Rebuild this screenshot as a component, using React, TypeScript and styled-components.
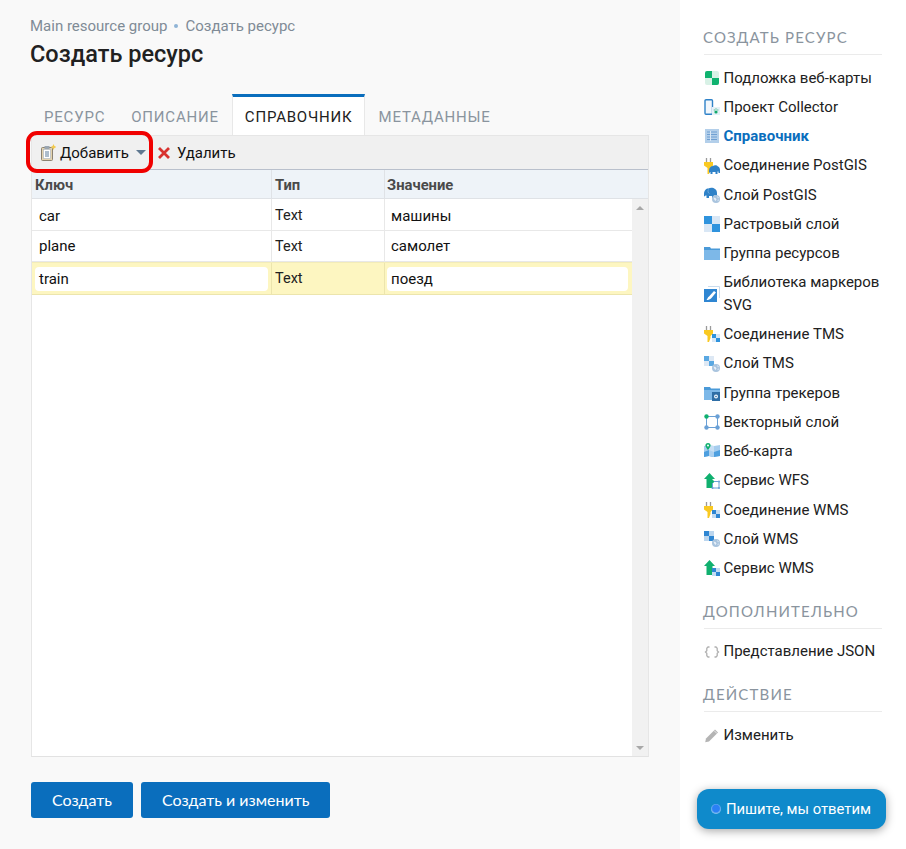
import React from 'react';
import styled, { createGlobalStyle } from 'styled-components';

const GlobalStyle = createGlobalStyle`
	html, body {
		margin: 0;
		padding: 0;
		background: #fff;
		font-family: Roboto, 'Liberation Sans', sans-serif;
		color: #212121;
	}
`;

const tabs = ['Ресурс', 'Описание', 'Справочник', 'Метаданные'];

const rows = [
	{ key: 'car', type: 'Text', value: 'машины' },
	{ key: 'plane', type: 'Text', value: 'самолет' },
	{ key: 'train', type: 'Text', value: 'поезд', selected: true },
];

const createItems = [
	{ icon: 'basemap', label: 'Подложка веб-карты' },
	{ icon: 'collector', label: 'Проект Collector' },
	{ icon: 'lookup', label: 'Справочник', active: true },
	{ icon: 'pgConn', label: 'Соединение PostGIS' },
	{ icon: 'pgLayer', label: 'Слой PostGIS' },
	{ icon: 'raster', label: 'Растровый слой' },
	{ icon: 'folder', label: 'Группа ресурсов' },
	{ icon: 'marker', label: 'Библиотека маркеров SVG' },
	{ icon: 'tmsConn', label: 'Соединение TMS' },
	{ icon: 'tmsLayer', label: 'Слой TMS' },
	{ icon: 'tracker', label: 'Группа трекеров' },
	{ icon: 'vector', label: 'Векторный слой' },
	{ icon: 'webmap', label: 'Веб-карта' },
	{ icon: 'wfs', label: 'Сервис WFS' },
	{ icon: 'wmsConn', label: 'Соединение WMS' },
	{ icon: 'wmsLayer', label: 'Слой WMS' },
	{ icon: 'wmsService', label: 'Сервис WMS' },
];

const Plug = () => (
	<g>
		<path d='M2.500 0v4M6.500 0v4' stroke='#9a9a9a' strokeWidth='1.300' />
		<path d='M0 4h9v3.500L6.500 10v2L5 16H3.500V10L0 7.500z' fill='#f9c922' />
	</g>
);

const Elephant = ({ x = 0, y = 0 }: { x?: number; y?: number }) => (
	<g transform={`translate(${x} ${y})`}>
		<path d='M0 5.500C0 2.500 2 1 4 1c1-1 4-1 5 .5 1.500.5 2 2 2 3.500v3H9.500V6.500h-1V9H6.500V7h-3v2h-2V7C1 7 .5 7.500 0 8z' fill='#2f82c8' />
	</g>
);

const Globe = ({ x = 0, y = 0 }: { x?: number; y?: number }) => (
	<g transform={`translate(${x} ${y})`}>
		<circle cx='4' cy='4' r='4' fill='#a9c4de' />
		<path d='M1.500 2.500l2 .5 1 1.500-1 1.500-1-1zM5 1l1.800 1.500L6 3.500zM5.500 5l1.500-.5-1 2z' fill='#e8f0f8' />
	</g>
);

const Checker = ({ x = 0, y = 0, size = 4, dark = '#2f93dd', light = '#d9e7f5' }: { x?: number; y?: number; size?: number; dark?: string; light?: string }) => (
	<g transform={`translate(${x} ${y})`}>
		<rect width={size} height={size} fill={dark} />
		<rect x={size} width={size} height={size} fill={light} />
		<rect y={size} width={size} height={size} fill={light} />
		<rect x={size} y={size} width={size} height={size} fill={dark} />
	</g>
);

const UpArrow = () => <path d='M5.500 0L11 6H8.500v9h-6V6H0z' fill='#10b06f' />;

const FolderShape = () => (
	<g>
		<path d='M0 2h6l1 1.500h9V6H0z' fill='#4a9ad8' />
		<rect y='5' width='16' height='10' fill='#7db8e8' />
	</g>
);

const glyphs: Record<string, React.ReactNode> = {
	basemap: (
		<g>
			<rect x='1' y='1' width='14' height='14' rx='2' fill='#d8f1e6' />
			<path d='M3 1h5v7H1V3a2 2 0 0 1 2-2zM8 8h7v5a2 2 0 0 1-2 2H8z' fill='#0fb26f' />
		</g>
	),
	collector: (
		<g>
			<rect x='1' y='0.700' width='7.500' height='14.600' rx='1' fill='#f2f7fc' stroke='#2f82c8' strokeWidth='1.400' />
			<rect x='8' y='8' width='8' height='8' fill='#e6f0f7' />
			<circle cx='12' cy='13' r='1.600' fill='#10a86a' />
			<path d='M9.800 10.500h.9v1h-.9zM11.500 9.600h1v1h-1zM13.400 10.500h.9v1h-.9z' fill='#10a86a' />
		</g>
	),
	lookup: (
		<g>
			<rect x='1' y='1' width='14' height='14' fill='#b3cfea' />
			<path d='M3 4h10M3 6.500h10M3 9h10M3 11.500h10' stroke='#6f9fd2' strokeWidth='1' />
			<path d='M6.500 3v10' stroke='#dbe8f5' strokeWidth='1' />
		</g>
	),
	pgConn: (
		<g>
			<Plug />
			<Elephant x={5} y={7} />
		</g>
	),
	pgLayer: (
		<g>
			<path d='M0 7C0 3.500 2 1.500 4.500 1.500 6 .5 9.500.5 11 2c1.500.8 2 2.500 2 4.500V10h-1.500V8h-1v3H8V9H5v2H2.500V8.500C1.500 8.500.8 9 0 9.500z' fill='#2f82c8' />
			<path d='M4.500 2.500C3.500 4 4 6 5.500 6.500' fill='none' stroke='#7fb2de' strokeWidth='.8' />
			<Globe x={8} y={8} />
		</g>
	),
	raster: <Checker size={8} />,
	folder: <FolderShape />,
	marker: (
		<g>
			<path d='M4 0.500h11.500V12' fill='none' stroke='#c9dcee' strokeWidth='1' />
			<rect y='3' width='13' height='13' fill='#2f86d2' />
			<path d='M2.500 14c1-1 1-2.500 2.500-3.500L10 5l2 1.500-4.500 5.500C6 13.500 4.500 14 2.500 14z' fill='#fff' />
		</g>
	),
	tmsConn: (
		<g>
			<Plug />
			<Checker x={8} y={8} size={4} dark='#2f93dd' light='#d9e7f5' />
		</g>
	),
	tmsLayer: (
		<g>
			<Checker size={5} dark='#5aa8e2' light='#dde8f4' />
			<Globe x={8} y={8} />
		</g>
	),
	tracker: (
		<g>
			<FolderShape />
			<rect x='8' y='7' width='8' height='9' fill='#2e6ea6' />
			<circle cx='12' cy='11.500' r='2' fill='#eef5fb' />
			<circle cx='12' cy='11.500' r='.8' fill='#2e6ea6' />
		</g>
	),
	vector: (
		<g>
			<rect x='2.500' y='2.500' width='11' height='11' fill='none' stroke='#6aa0d6' strokeWidth='1' />
			<circle cx='2.500' cy='2.500' r='2.200' fill='#10b06f' />
			<circle cx='13.500' cy='2.500' r='2.200' fill='#6aa0d6' />
			<circle cx='2.500' cy='13.500' r='2.200' fill='#6aa0d6' />
			<circle cx='13.500' cy='13.500' r='2.200' fill='#6aa0d6' />
		</g>
	),
	webmap: (
		<g>
			<path d='M0 3l5-1 5 1 6-1v11l-6 1-5-1-5 1z' fill='#a6cdee' />
			<path d='M0 9l5-2 5 2 6-2v6l-6 1-5-1-5 1z' fill='#4d9fdf' />
			<path d='M5 2l5 1v11l-5-1z' fill='#d5e7f6' opacity='0.700' />
			<path d='M4 0a2.600 2.600 0 0 1 2.600 2.600C6.600 4.200 4 7 4 7S1.400 4.200 1.400 2.600A2.600 2.600 0 0 1 4 0z' fill='#10b06f' />
			<circle cx='4' cy='2.600' r='1' fill='#fff' />
		</g>
	),
	wfs: (
		<g>
			<UpArrow />
			<rect x='8.500' y='8.500' width='6.500' height='6.500' fill='#fff' stroke='#6aa0d6' strokeWidth='1' />
			<circle cx='8.500' cy='8.500' r='1.500' fill='#10b06f' />
			<circle cx='15' cy='8.500' r='1' fill='#6aa0d6' />
			<circle cx='8.500' cy='15' r='1' fill='#6aa0d6' />
			<circle cx='15' cy='15' r='1' fill='#6aa0d6' />
		</g>
	),
	wmsConn: (
		<g>
			<Plug />
			<Checker x={8} y={8} size={4} dark='#2f86d2' light='#c4dcf2' />
		</g>
	),
	wmsLayer: (
		<g>
			<Checker size={5} dark='#2f86d2' light='#bcd6ee' />
			<Globe x={8} y={8} />
		</g>
	),
	wmsService: (
		<g>
			<UpArrow />
			<Checker x={8} y={8} size={4} dark='#2f86d2' light='#c4dcf2' />
		</g>
	),
	json: (
		<path d='M5.500 3H4L2.800 4.200v2.600L1.500 8l1.300 1.200v2.600L4 13h1.500M10.500 3H12l1.200 1.200v2.600L14.500 8l-1.300 1.200v2.600L12 13h-1.500' fill='none' stroke='#b0b0b0' strokeWidth='1.300' />
	),
	edit: (
		<g>
			<path d='M2 11.500L11 2.500l3 3-9 9-3.800.8z' fill='#b4b4b4' />
			<path d='M10 3.500l3 3' stroke='#fff' strokeWidth='.7' />
		</g>
	),
};

const Icon = ({ name }: { name: string }) => (
	<IconSvg viewBox='0 0 16 16' aria-hidden='true'>
		{glyphs[name]}
	</IconSvg>
);

const SideItem = ({ icon, label, active }: { icon: string; label: string; active?: boolean }) => (
	<SideRow>
		<Icon name={icon} />
		<SideLabel $active={active}>{label}</SideLabel>
	</SideRow>
);

const App = () => {
	return (
		<Page>
			<GlobalStyle />
			<Main>
				<Breadcrumb>
					Main resource group<Dot />Создать ресурс
				</Breadcrumb>
				<Title>Создать ресурс</Title>
				<TabBar>
					{tabs.map((tab) => (
						<Tab key={tab} $active={tab === 'Справочник'}>
							{tab}
						</Tab>
					))}
				</TabBar>
				<Panel>
					<Toolbar>
						<ToolButton>
							<svg width='16' height='18' viewBox='-1 0 16 18' aria-hidden='true'>
								<rect x='0.500' y='3.500' width='11' height='13' rx='1' fill='#e4d3ad' stroke='#8b8272' />
								<rect x='2.500' y='5.500' width='7' height='9' fill='#fff' stroke='#a9b4c2' strokeWidth='.6' />
								<rect x='3.500' y='2' width='5' height='3' fill='#9aa5b0' />
								<path d='M4 8h4M4 10h4M4 12h4' stroke='#5a7a9a' strokeWidth='1' />
								<path d='M12.500 0l.9 2.100 2.100.9-2.100.9-.9 2.100-.9-2.100-2.100-.9 2.100-.9z' fill='#f2c94c' />
							</svg>
							Добавить
							<Caret />
						</ToolButton>
						<ToolButton>
							<DeleteIcon viewBox='0 0 14 14' aria-hidden='true'>
								<path d='M2 2l10 10M12 2L2 12' stroke='#d8322e' strokeWidth='2.800' />
							</DeleteIcon>
							Удалить
						</ToolButton>
					</Toolbar>
					<Highlight />
					<HeaderRow>
						<HeaderCell>Ключ</HeaderCell>
						<HeaderCell>Тип</HeaderCell>
						<HeaderCell>Значение</HeaderCell>
					</HeaderRow>
					<TableBody>
						<Rows>
							{rows.map((row) => (
								<Row key={row.key} $selected={row.selected}>
									<EditCell $selected={row.selected}>
										<EditBox $selected={row.selected}>{row.key}</EditBox>
									</EditCell>
									<TypeCell $selected={row.selected}>{row.type}</TypeCell>
									<EditCell $selected={row.selected} $last>
										<EditBox $selected={row.selected}>{row.value}</EditBox>
									</EditCell>
								</Row>
							))}
						</Rows>
						<Scrollbar>
							<ScrollArrow $up />
							<ScrollArrow />
						</Scrollbar>
					</TableBody>
				</Panel>
				<Actions>
					<PrimaryButton>Создать</PrimaryButton>
					<PrimaryButton>Создать и изменить</PrimaryButton>
				</Actions>
			</Main>
			<Sidebar>
				<SideHeading>Создать ресурс</SideHeading>
				<SideList>
					{createItems.map((item) => (
						<SideItem key={item.label} {...item} />
					))}
				</SideList>
				<SideHeading>Дополнительно</SideHeading>
				<SideList>
					<SideItem icon='json' label='Представление JSON' />
				</SideList>
				<SideHeading>Действие</SideHeading>
				<SideList>
					<SideItem icon='edit' label='Изменить' />
				</SideList>
			</Sidebar>
			<ChatWidget>
				<ChatDot />
				Пишите, мы ответим
			</ChatWidget>
		</Page>
	);
};

export default App;

const Page = styled.div`
	position: relative;
	display: flex;
	width: 906px;
	height: 849px;
	overflow: hidden;
`;

const Main = styled.main`
	width: 680px;
	box-sizing: border-box;
	padding: 16px 31px 0 30px;
	background: #f9f9f9;
	display: flex;
	flex-direction: column;
`;

const Breadcrumb = styled.div`
	display: flex;
	align-items: center;
	font-size: 15px;
	line-height: 20px;
	color: #7f8b96;
`;

const Dot = styled.span`
	width: 4px;
	height: 4px;
	margin: 0 7px;
	border-radius: 50%;
	background: #8fb4d6;
`;

const Title = styled.h1`
	margin: 4px 0 0;
	font-size: 23.500px;
	line-height: 28px;
	font-weight: 500;
	color: #212121;
`;

const TabBar = styled.div`
	display: flex;
	margin-top: 26px;
	height: 41px;
	padding-left: 2px;
	gap: 2px;
`;

const Tab = styled.div<{ $active?: boolean }>`
	box-sizing: border-box;
	height: 41px;
	padding: 8px ${(p) => (p.$active ? '11px' : '12px')} 0 12px;
	font-size: 15px;
	line-height: 24px;
	letter-spacing: 0.800px;
	text-transform: uppercase;
	color: ${(p) => (p.$active ? '#212121' : '#8a949e')};
	background: ${(p) => (p.$active ? '#fff' : 'transparent')};
	border-top: 3px solid ${(p) => (p.$active ? '#0a6ebd' : 'transparent')};
	${(p) => p.$active && 'border-left: 1px solid #e8e8e8; border-right: 1px solid #e8e8e8; margin-left: -1px;'}
`;

const Panel = styled.section`
	position: relative;
	width: 618px;
	height: 622px;
	margin-left: 1px;
	box-sizing: border-box;
	border: 1px solid #e6e6e6;
	border-bottom-color: #e2e2e2;
	display: flex;
	flex-direction: column;
`;

const Toolbar = styled.div`
	display: flex;
	align-items: center;
	height: 33px;
	padding-left: 8px;
	gap: 11px;
	background: #f0f0f0;
`;

const ToolButton = styled.div`
	display: flex;
	align-items: center;
	gap: 4px;
	font-size: 15px;
	color: #111;
`;

const DeleteIcon = styled.svg`
	width: 14px;
	height: 14px;
	margin-right: 2px;
`;

const Caret = styled.span`
	width: 0;
	height: 0;
	margin-left: 3px;
	border-left: 5px solid transparent;
	border-right: 5px solid transparent;
	border-top: 5px solid #5f7890;
`;

const Highlight = styled.div`
	position: absolute;
	left: -6px;
	top: -5px;
	width: 127px;
	height: 42px;
	box-sizing: border-box;
	border: 4px solid #f00000;
	border-radius: 11px;
	pointer-events: none;
`;

const HeaderRow = styled.div`
	display: grid;
	grid-template-columns: 240px 113px 1fr;
	height: 30px;
	box-sizing: border-box;
	background: #eef3f8;
	border-top: 1px solid #b9c0cc;
	border-bottom: 1px solid #dfe2e6;
`;

const HeaderCell = styled.div`
	padding: 1px 3px 0;
	font-size: 14.800px;
	font-weight: 700;
	line-height: 28px;
	color: #4a4a4a;
	border-right: 1px solid #dfe2e6;

	&:last-child {
		border-right: 0;
		padding-left: 2px;
	}
`;

const TableBody = styled.div`
	flex: 1;
	display: flex;
	background: #fff;
`;

const Rows = styled.div`
	flex: 1;
	display: flex;
	flex-direction: column;
`;

const Row = styled.div<{ $selected?: boolean }>`
	display: grid;
	grid-template-columns: 240px 113px 1fr;
	height: ${(p) => (p.$selected ? '33px' : '32px')};
	box-sizing: border-box;
	background: ${(p) => (p.$selected ? '#fdf6c1' : '#fff')};
	border-bottom: 1px solid ${(p) => (p.$selected ? '#ece5ad' : '#e8e8e8')};
	${(p) => p.$selected && 'border-top: 1px solid #f3ecb8;'}

	&:nth-child(2) {
		height: 31px;
	}
`;

const EditCell = styled.div<{ $selected?: boolean; $last?: boolean }>`
	display: flex;
	align-items: center;
	padding: ${(p) => (p.$selected ? '1px' : '0')} ${(p) => (p.$last ? '4px' : '3px')} 0 ${(p) => (p.$last ? '2px' : '3px')};
	border-right: ${(p) => (p.$last ? '0' : '1px solid')};
	border-color: ${(p) => (p.$selected ? '#ece5ad' : '#e8e8e8')};

	${Row}:first-child & {
		padding-top: 2px;
	}
`;

const EditBox = styled.div<{ $selected?: boolean }>`
	flex: 1;
	height: 24px;
	padding: 0 4px;
	font-size: 15px;
	line-height: 24px;
	color: #111;
	border-radius: 4px;
	background: ${(p) => (p.$selected ? '#fff' : 'transparent')};
`;

const TypeCell = styled.div<{ $selected?: boolean }>`
	display: flex;
	align-items: center;
	padding: 0 3px;
	font-size: 14.500px;
	color: #212121;
	border-right: 1px solid ${(p) => (p.$selected ? '#ece5ad' : '#e8e8e8')};

	${Row}:first-child & {
		padding-top: 1px;
	}
`;

const Scrollbar = styled.div`
	width: 16px;
	background: #f1f1f1;
	display: flex;
	flex-direction: column;
	justify-content: space-between;
	align-items: center;
	padding: 7px 0 6px;
`;

const ScrollArrow = styled.span<{ $up?: boolean }>`
	width: 0;
	height: 0;
	border-left: 4px solid transparent;
	border-right: 4px solid transparent;
	${(p) => (p.$up ? 'border-bottom: 4px solid #a8a8a8;' : 'border-top: 4px solid #a8a8a8;')}
`;

const Actions = styled.div`
	display: flex;
	gap: 8px;
	margin: 25px 0 0 1px;
`;

const PrimaryButton = styled.div`
	height: 36px;
	padding: 0 21px;
	font-family: Lato, sans-serif;
	font-size: 16px;
	line-height: 36px;
	color: #fff;
	background: #0a6ebd;
	border-radius: 3px;
`;

const Sidebar = styled.aside`
	width: 226px;
	box-sizing: border-box;
	padding: 26px 24px 0 24px;
	background: #fff;
`;

const SideHeading = styled.h3`
	margin: 0 0 8.200px;
	padding-bottom: 5px;
	font-family: Lato, sans-serif;
	font-size: 15px;
	font-weight: 400;
	line-height: 23px;
	letter-spacing: 1.150px;
	text-indent: -1px;
	text-transform: uppercase;
	color: #8a949e;
	border-bottom: 1px solid #ebebeb;
`;

const SideList = styled.div`
	margin-bottom: 16.800px;
`;

const SideRow = styled.div`
	display: flex;
	align-items: center;
	gap: 3.500px;
	padding: 3.375px 0;
`;

const IconSvg = styled.svg`
	flex: none;
	width: 16px;
	height: 16px;
`;

const SideLabel = styled.span<{ $active?: boolean }>`
	font-size: 15px;
	line-height: 22.500px;
	font-weight: ${(p) => (p.$active ? 700 : 400)};
	color: ${(p) => (p.$active ? '#0a6ebd' : '#212121')};
`;

const ChatWidget = styled.div`
	position: absolute;
	left: 697px;
	top: 789px;
	width: 189px;
	height: 40px;
	box-sizing: border-box;
	display: flex;
	align-items: center;
	gap: 5px;
	padding-left: 14px;
	font-size: 14.800px;
	color: #fff;
	background: #0f8acb;
	border-radius: 12px;
	box-shadow: 0 2px 10px rgba(0, 0, 0, 0.35);
`;

const ChatDot = styled.span`
	width: 10px;
	height: 10px;
	border-radius: 50%;
	background: radial-gradient(circle at 50% 45%, #2a80f5 45%, #8cc4f0 70%, #d5ecfa 92%);
`;
